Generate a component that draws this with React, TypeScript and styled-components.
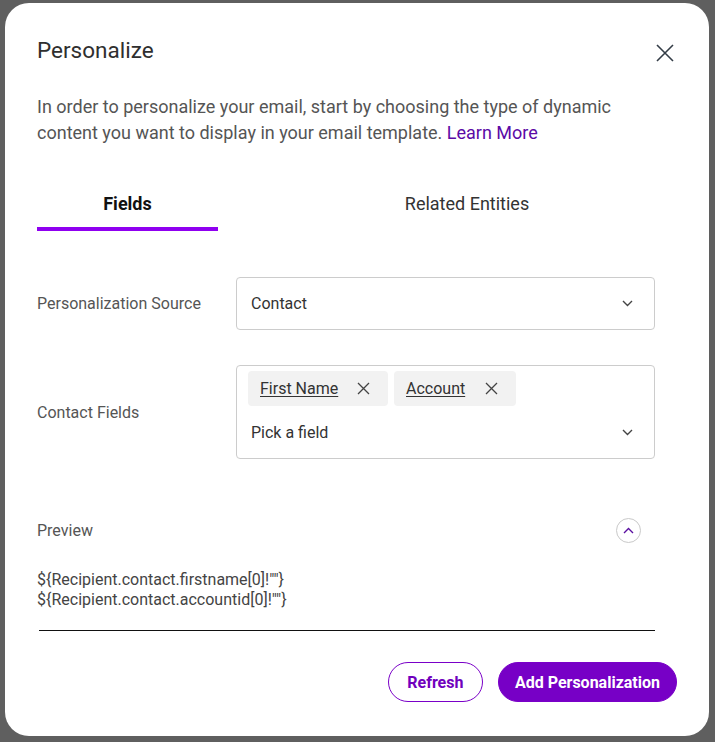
import React from 'react';
import styled, { createGlobalStyle } from 'styled-components';

const GlobalStyle = createGlobalStyle`
  html, body {
    margin: 0;
    padding: 0;
    background: #5f5f5f;
  }
  body {
    font-family: Roboto, "Liberation Sans", Arial, sans-serif;
    -webkit-font-smoothing: antialiased;
  }
  * {
    box-sizing: border-box;
  }
`;

const Backdrop = styled.div`
  width: 715px;
  height: 742px;
  padding: 3px 0 0 5px;
  background: #5f5f5f;
  overflow: hidden;
`;

const Modal = styled.div`
  display: flex;
  flex-direction: column;
  width: 704px;
  height: 733px;
  padding: 33px 32px 34px 32px;

  background: #ffffff;
  border-radius: 24px;
`;

const Header = styled.div`
  display: flex;
  justify-content: space-between;
  align-items: flex-start;
`;

const Title = styled.h1`
  margin: 0;

  font-size: 22.5px;
  line-height: 28px;
  font-weight: 400;
  color: #2f2f2f;
`;

const CloseButton = styled.button`
  display: flex;
  margin: 8px 3px 0 0;
  padding: 0;
  border: none;
  background: none;
  cursor: pointer;
`;

const Description = styled.p`
  margin: 30px 0 0;
  width: 610px;

  font-size: 18px;
  line-height: 26px;
  color: #555555;
`;

const LearnMore = styled.a`
  color: #5b0aa6;
  text-decoration: none;
`;

const TabBar = styled.div`
  display: flex;
  justify-content: space-between;
  margin-top: 46px;
`;

const Tab = styled.div<{ $active?: boolean; $width: number }>`
  width: ${(p) => p.$width}px;
  padding-bottom: 11px;
  border-bottom: 4px solid ${(p) => (p.$active ? '#8f00f0' : 'transparent')};

  text-align: center;
  font-size: 18px;
  line-height: 24px;
  font-weight: ${(p) => (p.$active ? 700 : 400)};
  color: ${(p) => (p.$active ? '#111111' : '#333333')};
`;

const Form = styled.div`
  display: flex;
  flex-direction: column;
  gap: 35px;
  width: 618px;
  margin-top: 46px;
`;

const FieldRow = styled.div`
  display: flex;
  align-items: center;
`;

const Label = styled.div`
  width: 199px;

  font-size: 16px;
  color: #555555;
`;

const SelectBox = styled.div`
  display: flex;
  flex-direction: column;
  width: 419px;

  border: 1px solid #cccccc;
  border-radius: 4px;
`;

const SelectLine = styled.div<{ $height: number }>`
  display: flex;
  align-items: center;
  justify-content: space-between;
  height: ${(p) => p.$height}px;
  padding: 0 21px 0 14px;

  font-size: 16px;
  color: #333333;
`;

const Chips = styled.div`
  display: flex;
  gap: 6px;
  padding: 5px 11px 0;
`;

const Chip = styled.div<{ $width: number }>`
  display: flex;
  align-items: center;
  justify-content: space-between;
  width: ${(p) => p.$width}px;
  height: 35px;
  padding: 0 18px 0 12px;

  background: #f2f2f2;
  border-radius: 4px;

  font-size: 16px;
  color: #333333;
  text-decoration: underline;
  text-underline-offset: 2px;
`;

const PreviewSection = styled.div`
  display: flex;
  flex-direction: column;
  width: 618px;
  margin-top: 59px;
`;

const PreviewHeader = styled.div`
  display: flex;
  justify-content: space-between;
  align-items: center;
  padding-right: 14px;
`;

const ToggleButton = styled.button`
  display: flex;
  align-items: center;
  justify-content: center;
  width: 25px;
  height: 25px;
  padding: 0;

  background: #ffffff;
  border: 1px solid #c9c9c9;
  border-radius: 50%;
  cursor: pointer;
`;

const PreviewText = styled.div`
  margin-top: 27px;

  font-size: 16px;
  line-height: 20px;
  color: #444444;
`;

const PreviewRule = styled.hr`
  width: 616px;
  margin: 20px 0 0 2px;
  border: none;
  border-top: 1px solid #111111;
`;

const Footer = styled.div`
  display: flex;
  justify-content: flex-end;
  gap: 15px;
  margin-top: auto;
`;

const Button = styled.button<{ $primary?: boolean }>`
  height: 40px;
  padding: 0 ${(p) => (p.$primary ? 16 : 18.5)}px;

  border: 1px solid #7a00c8;
  border-radius: 20px;
  background: ${(p) => (p.$primary ? '#7700c6' : '#ffffff')};
  cursor: pointer;

  font-family: inherit;
  font-size: 16px;
  font-weight: 700;
  color: ${(p) => (p.$primary ? '#ffffff' : '#7000bd')};
`;

const CloseIcon = ({ size, color }: { size: number; color: string }) => (
  <svg width={size} height={size} viewBox="0 0 18 18" fill="none">
    <path d="M1 1L17 17M17 1L1 17" stroke={color} strokeWidth="1.6" />
  </svg>
);

const Chevron = ({ up, color }: { up?: boolean; color: string }) => (
  <svg width="11" height="7" viewBox="0 0 11 7" fill="none">
    <path
      d={up ? 'M1 6L5.5 1.5L10 6' : 'M1 1L5.5 5.5L10 1'}
      stroke={color}
      strokeWidth="1.4"
    />
  </svg>
);

const ChipClose = () => (
  <svg width="13" height="13" viewBox="0 0 13 13" fill="none">
    <path d="M1 1L12 12M12 1L1 12" stroke="#444" strokeWidth="1.3" />
  </svg>
);

const App = () => {
  return (
    <>
      <GlobalStyle />
      <Backdrop>
        <Modal>
          <Header>
            <Title>Personalize</Title>
            <CloseButton aria-label="Close">
              <CloseIcon size={18} color="#333c46" />
            </CloseButton>
          </Header>

          <Description>
            In order to personalize your email, start by choosing the type of dynamic content you
            want to display in your email template. <LearnMore href="#">Learn More</LearnMore>
          </Description>

          <TabBar>
            <Tab $active $width={181}>
              Fields
            </Tab>
            <Tab $width={420}>Related Entities</Tab>
          </TabBar>

          <Form>
            <FieldRow>
              <Label>Personalization Source</Label>
              <SelectBox>
                <SelectLine $height={51}>
                  Contact
                  <Chevron color="#444" />
                </SelectLine>
              </SelectBox>
            </FieldRow>

            <FieldRow>
              <Label>Contact Fields</Label>
              <SelectBox>
                <Chips>
                  <Chip $width={140}>
                    First Name
                    <ChipClose />
                  </Chip>
                  <Chip $width={122}>
                    Account
                    <ChipClose />
                  </Chip>
                </Chips>
                <SelectLine $height={52}>
                  Pick a field
                  <Chevron color="#444" />
                </SelectLine>
              </SelectBox>
            </FieldRow>
          </Form>

          <PreviewSection>
            <PreviewHeader>
              <Label>Preview</Label>
              <ToggleButton aria-label="Collapse preview">
                <Chevron up color="#5a0fa0" />
              </ToggleButton>
            </PreviewHeader>
            <PreviewText>
              {'${Recipient.contact.firstname[0]!""}'}
              <br />
              {'${Recipient.contact.accountid[0]!""}'}
            </PreviewText>
            <PreviewRule />
          </PreviewSection>

          <Footer>
            <Button>Refresh</Button>
            <Button $primary>Add Personalization</Button>
          </Footer>
        </Modal>
      </Backdrop>
    </>
  );
};

export default App;
